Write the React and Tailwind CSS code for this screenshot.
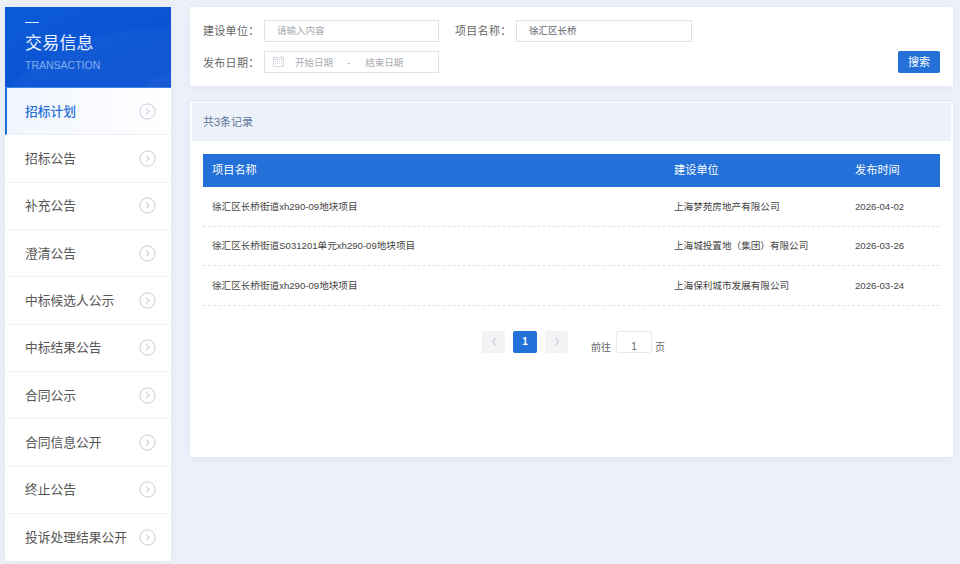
const items = ["招标计划","招标公告","补充公告","澄清公告","中标候选人公示","中标结果公告","合同公示","合同信息公开","终止公告","投诉处理结果公开"];
const rows = [
  ["徐汇区长桥街道xh290-09地块项目","上海梦苑房地产有限公司","2026-04-02"],
  ["徐汇区长桥街道S031201单元xh290-09地块项目","上海城投置地（集团）有限公司","2026-03-26"],
  ["徐汇区长桥街道xh290-09地块项目","上海保利城市发展有限公司","2026-03-24"],
];

function Arrow() {
  return (
    <svg width="17" height="17" viewBox="0 0 17 17" fill="none" className="shrink-0">
      <circle cx="8.5" cy="8.5" r="7.6" stroke="#c3ccd8" strokeWidth="1" />
      <path d="M7.2 5.6 L10 8.5 L7.2 11.4" stroke="#aab5c4" strokeWidth="1" />
    </svg>
  );
}

function Calendar() {
  return (
    <svg width="11" height="11" viewBox="0 0 11 11" fill="none" className="shrink-0 -mt-[3px]">
      <rect x="0.5" y="1.5" width="10" height="9" stroke="#d5d8de" />
      <path d="M0.5 3.5 H10.5 M3 0 V2 M8 0 V2" stroke="#d5d8de" />
      <path d="M2 5.5 H9 M2 7.5 H9" stroke="#d5d8de" strokeDasharray="1 1" />
    </svg>
  );
}

export default function App() {
  return (
    <div className="w-[960px] h-[564px] overflow-hidden bg-[#edf1f9] flex items-start gap-[19px] pl-[5px] pt-[7px] font-['Liberation_Sans','Noto_Sans_CJK_SC',sans-serif]">
      <aside className="w-[166px] shrink-0 bg-white shadow-[0_0_10px_rgba(60,90,150,0.08)]">
        <div className="relative h-[81px] overflow-hidden bg-gradient-to-br from-[#0c5ad6] to-[#0a50d2] pl-[20px] pt-[15px] border-b border-[#3f83e6]">
          <div className="absolute -left-[60px] top-[22px] w-[420px] h-[420px] rounded-full bg-white/[0.03]"></div>
          <div className="absolute left-[100px] top-[58px] w-[200px] h-[200px] rounded-full bg-white/[0.03]"></div>
          <div className="relative w-[14px] h-px bg-white/90"></div>
          <div className="relative mt-[8px] text-[17px] leading-[26px] text-[#eef4ff] tracking-[0.2px]">交易信息</div>
          <div className="relative mt-[1px] text-[10.5px] leading-[14px] text-[#83aeee]">TRANSACTION</div>
        </div>
        {items.map((t, i) => (
          <div
            key={t}
            className={
              i === 0
                ? "h-[47.33px] flex items-center justify-between pl-[18px] pr-[15px] border-l-2 border-l-[#1f6fd9] border-b border-b-[#eef1f6] bg-gradient-to-r from-[#f1f5fd] to-white text-[12.75px] font-medium text-[#2470d8]"
                : i === items.length - 1
                ? "h-[47.33px] flex items-center justify-between pl-[20px] pr-[15px] text-[12.75px] text-[#555555]"
                : "h-[47.33px] flex items-center justify-between pl-[20px] pr-[15px] border-b border-b-[#f1f3f7] text-[12.75px] text-[#555555]"
            }
          >
            <span className="whitespace-nowrap">{t}</span>
            <Arrow />
          </div>
        ))}
      </aside>

      <main className="w-[763px] shrink-0 flex flex-col gap-[16px]">
        <section className="h-[79px] bg-white shadow-[0_2px_10px_rgba(60,90,150,0.08)] px-[13px] pt-[13px] flex justify-between items-end pb-[13px]">
          <div className="flex flex-col gap-[9px] text-[11px] text-[#666666]">
            <div className="flex items-center">
              <span className="w-[61px] tracking-[0.3px]">建设单位：</span>
              <div className="w-[175px] h-[22px] border border-[#dfe1e5] pl-[12px] flex items-center text-[9.5px] text-[#a8abb2]">请输入内容</div>
              <span className="w-[61px] ml-[16px] tracking-[0.3px]">项目名称：</span>
              <div className="w-[176px] h-[22px] border border-[#dfe1e5] pl-[12px] flex items-center text-[9.5px] text-[#606266]">徐汇区长桥</div>
            </div>
            <div className="flex items-center">
              <span className="w-[61px] tracking-[0.3px] pt-[2px]">发布日期：</span>
              <div className="w-[175px] h-[22px] border border-[#dfe1e5] pl-[8px] pt-[2px] flex items-center text-[9.5px] text-[#a8abb2]">
                <Calendar />
                <span className="ml-[11px]">开始日期</span>
                <span className="ml-[14px]">-</span>
                <span className="ml-[15px]">结束日期</span>
              </div>
            </div>
          </div>
          <button className="w-[42px] h-[22px] rounded-[2px] bg-[#2270d8] text-white text-[11px]">搜索</button>
        </section>

        <section className="h-[355px] bg-white shadow-[0_2px_10px_rgba(60,90,150,0.08)] pt-[1px] px-[2px]">
          <div className="h-[38px] bg-[#ecf1fa] pl-[11px] flex items-center text-[11px] text-[#5d7798]">共3条记录</div>
          <div className="mx-[11px] mt-[13px]">
            <div className="h-[33px] bg-[#2270d8] flex items-center text-white text-[11.2px]">
              <span className="w-[471px] pl-[9px]">项目名称</span>
              <span className="w-[181px]">建设单位</span>
              <span>发布时间</span>
            </div>
            {rows.map((r) => (
              <div key={r[2]} className="h-[39.5px] pt-[1px] flex items-center border-b border-dashed border-[#dfe3e9] text-[9.6px] text-[#444444]">
                <span className="w-[471px] pl-[9px]">{r[0]}</span>
                <span className="w-[181px]">{r[1]}</span>
                <span>{r[2]}</span>
              </div>
            ))}
            <div className="mt-[25px] h-[22px] flex items-center pl-[279px]">
              <div className="w-[23px] h-[22px] rounded-[2px] bg-[#f2f3f5] flex items-center justify-center">
                <svg width="6" height="9" viewBox="0 0 6 9" fill="none"><path d="M4.5 1 L1.5 4.5 L4.5 8" stroke="#b8bcc4" /></svg>
              </div>
              <div className="ml-[8px] w-[24px] h-[22px] rounded-[2px] bg-[#2270d8] flex items-center justify-center text-white text-[10px] font-bold">1</div>
              <div className="ml-[8px] w-[23px] h-[22px] rounded-[2px] bg-[#f2f3f5] flex items-center justify-center">
                <svg width="6" height="9" viewBox="0 0 6 9" fill="none"><path d="M1.5 1 L4.5 4.5 L1.5 8" stroke="#b8bcc4" /></svg>
              </div>
              <span className="ml-[23px] h-[22px] pt-[11px] flex items-center text-[10px] text-[#666666]">前往</span>
              <div className="ml-[5px] w-[36px] h-[22px] rounded-[3px] border border-[#e6e8ef] flex items-center justify-center text-[10px] text-[#666666] pt-[9px]">1</div>
              <span className="ml-[3px] h-[22px] pt-[11px] flex items-center text-[10px] text-[#666666]">页</span>
            </div>
          </div>
        </section>
      </main>
    </div>
  );
}
